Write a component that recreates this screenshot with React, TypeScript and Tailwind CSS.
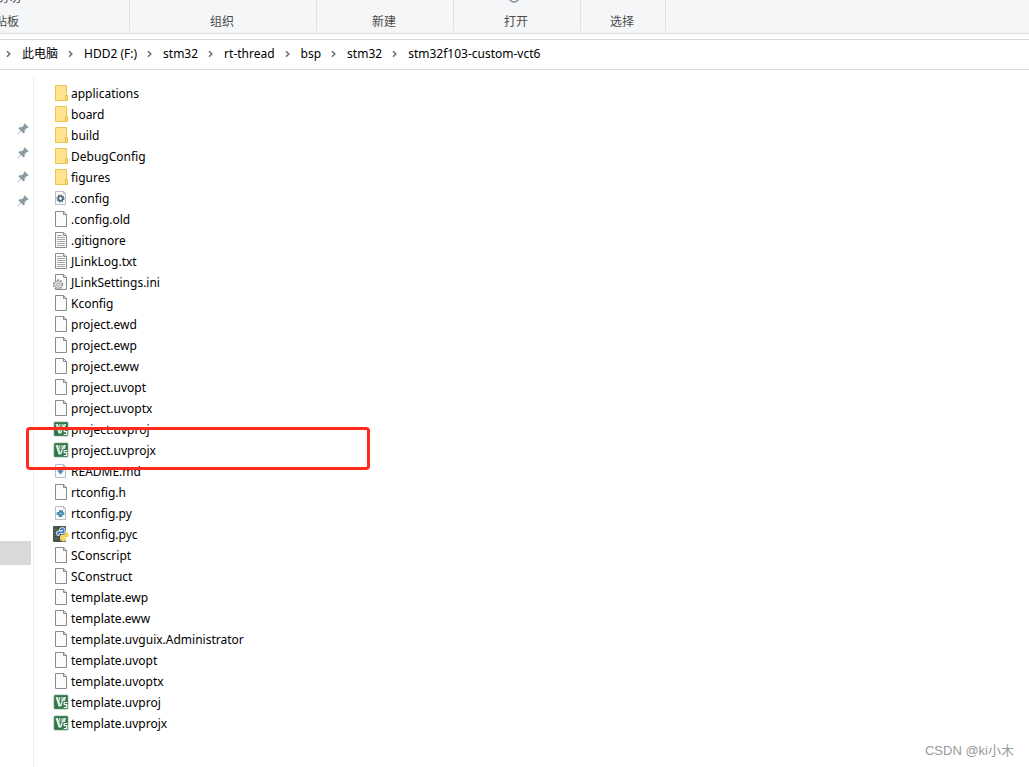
import { Fragment } from "react";

type IconKind =
  | "folder"
  | "config"
  | "file"
  | "text"
  | "settings"
  | "keil"
  | "markdown"
  | "python"
  | "pyc";

const files: { name: string; icon: IconKind }[] = [
  { name: "applications", icon: "folder" },
  { name: "board", icon: "folder" },
  { name: "build", icon: "folder" },
  { name: "DebugConfig", icon: "folder" },
  { name: "figures", icon: "folder" },
  { name: ".config", icon: "config" },
  { name: ".config.old", icon: "file" },
  { name: ".gitignore", icon: "text" },
  { name: "JLinkLog.txt", icon: "text" },
  { name: "JLinkSettings.ini", icon: "settings" },
  { name: "Kconfig", icon: "file" },
  { name: "project.ewd", icon: "file" },
  { name: "project.ewp", icon: "file" },
  { name: "project.eww", icon: "file" },
  { name: "project.uvopt", icon: "file" },
  { name: "project.uvoptx", icon: "file" },
  { name: "project.uvproj", icon: "keil" },
  { name: "project.uvprojx", icon: "keil" },
  { name: "README.md", icon: "markdown" },
  { name: "rtconfig.h", icon: "file" },
  { name: "rtconfig.py", icon: "python" },
  { name: "rtconfig.pyc", icon: "pyc" },
  { name: "SConscript", icon: "file" },
  { name: "SConstruct", icon: "file" },
  { name: "template.ewp", icon: "file" },
  { name: "template.eww", icon: "file" },
  { name: "template.uvguix.Administrator", icon: "file" },
  { name: "template.uvopt", icon: "file" },
  { name: "template.uvoptx", icon: "file" },
  { name: "template.uvproj", icon: "keil" },
  { name: "template.uvprojx", icon: "keil" },
];

const path = ["此电脑", "HDD2 (F:)", "stm32", "rt-thread", "bsp", "stm32", "stm32f103-custom-vct6"];

const groups = [
  { label: "组织", width: "w-[187px]" },
  { label: "新建", width: "w-[137px]" },
  { label: "打开", width: "w-[127px]" },
  { label: "选择", width: "w-[85px]" },
];

function Page() {
  return (
    <>
      <path d="M2.5.5h8l3 3v12h-11z" fill="#fafbfc" stroke="#8b8b8b" />
      <path d="M10.5.5v3h3" fill="none" stroke="#8b8b8b" />
    </>
  );
}

function SmallPage() {
  return (
    <>
      <path d="M2.5 1.5h8l2 2v11h-10z" fill="#f8fafb" stroke="#b9bec2" />
      <path d="M10.5 1.5v2h2" fill="none" stroke="#b9bec2" />
    </>
  );
}

function FileIcon({ kind }: { kind: IconKind }) {
  return (
    <svg width="16" height="16" viewBox="0 0 16 16" className="shrink-0" aria-hidden="true">
      {kind === "folder" && (
        <>
          <path d="M2.5.5h11v15h-11z" fill="#ffe391" stroke="#eac64f" />
          <path d="M12.5 10.5h2v5h-2z" fill="#ffe08a" stroke="#e6bf45" />
        </>
      )}
      {kind === "file" && <Page />}
      {kind === "text" && (
        <>
          <Page />
          <path d="M4 3.5h5M4 5.5h8M4 7.5h8M4 9.5h8M4 11.5h8M4 13.5h8" stroke="#a8a8a8" />
        </>
      )}
      {kind === "settings" && (
        <>
          <Page />
          <circle cx="5" cy="10.5" r="4.4" fill="#f1f1f1" stroke="#8e8e8e" strokeWidth="1.6" strokeDasharray="1.7 1.1" />
          <circle cx="5" cy="10.5" r="3.6" fill="#e4e4e4" stroke="#9b9b9b" strokeWidth=".7" />
          <circle cx="5" cy="10.5" r="1.4" fill="#fff" stroke="#888" strokeWidth=".8" />
        </>
      )}
      {kind === "config" && (
        <>
          <SmallPage />
          <circle cx="7.5" cy="8.5" r="3.2" fill="none" stroke="#50697a" strokeWidth="1.6" strokeDasharray="1.4 1.1" />
          <circle cx="7.5" cy="8.5" r="2.2" fill="#fff" stroke="#50697a" strokeWidth="1.6" />
        </>
      )}
      {kind === "markdown" && (
        <>
          <SmallPage />
          <path d="M6 5.500h3v2h2L7.500 11.500 4 7.500h2z" fill="#4d8fb3" />
        </>
      )}
      {kind === "python" && (
        <>
          <SmallPage />
          <path
            d="M6 5.500Q6 5 7 5h1.500Q10 5 10 6v1h.5q1 0 1 1.500T10.500 10H9.500v1q0 1-1 1h-2q-1 0-1-1v-1h-1q-1 0-1-1.500T4.500 7H6z"
            fill="#4b8fb5"
          />
          <path d="M6 8.500h3.500" stroke="#b5d3e2" strokeWidth=".6" />
        </>
      )}
      {kind === "pyc" && (
        <>
          <rect width="13" height="16" rx="1" fill="#46544a" />
          <path d="M1 3.500h3M1 6.500h2M1 9.500h3M1 12.500h4" stroke="#637468" strokeWidth=".8" />
          <path
            d="M6.500 3.500Q6.500 1.500 9.300 1.500T12 3.500V6q0 1.500-1.500 1.500h-3Q6 7.500 6 9.500H5Q3.500 9.500 3.500 7T5 5h4.500V4.500h-3z"
            fill="#4384bd"
            stroke="#fff"
            strokeWidth=".8"
          />
          <path
            d="M12.500 6H14q2 0 2 2.700T14 11.500h-4v.5h3v1.500q0 1.500-2.500 1.500T7.500 13.500v-3Q7.500 9 9 9h2q1.500 0 1.500-1.500z"
            fill="#fccf35"
            stroke="#fff"
            strokeWidth=".6"
          />
        </>
      )}
      {kind === "keil" && (
        <>
          <rect x="1" y="1" width="14" height="14" rx="1" fill="#2f7548" stroke="#80a98c" strokeWidth=".7" />
          <path d="M2.500 3H5l2 6v3.500H5.500z" fill="#dce9df" />
          <path d="M6 3h1.300v4H6.500zM8.500 3h1.300l-.5 4h-.8z" fill="#dce9df" />
          <path d="M10.700 3H13l-1 4H10L8.500 12.500H6.500L8 8.500z" fill="#dce9df" />
          <path d="M14.200 8.500h-3v2.200h2.500v2.800h-3" fill="none" stroke="#fff" strokeWidth="1.200" />
        </>
      )}
    </svg>
  );
}

function Chevron() {
  return (
    <span className="flex w-[26px] shrink-0 justify-center">
      <svg width="6" height="8" viewBox="0 0 6 8" aria-hidden="true">
        <path d="M1 1.200 3.800 4 1 6.800" fill="none" stroke="#707070" strokeWidth="1.600" />
      </svg>
    </span>
  );
}

function Pin() {
  return (
    <svg width="12" height="12" viewBox="0 0 11 11" aria-hidden="true">
      <path d="M6.800.3 10.700 4l-1 .8-.7-.2-2 2 .1 2-1 1L3.800 7.300.5 10.700l-.2-.3L3.400 7 1.200 4.800l1-1 2.200.2 2-2-.4-.8z" fill="#8d9aa3" />
    </svg>
  );
}

export default function App() {
  return (
    <div className="relative flex min-h-screen flex-col overflow-hidden bg-white font-['Noto_Sans','Noto_Sans_CJK_SC',sans-serif] text-xs text-black">
      {/* Ribbon */}
      <header className="flex h-[34px] shrink-0 overflow-hidden border-b border-[#dadbdc] bg-[#f5f6f7] text-[#4b4b4b]">
        <div className="flex h-[31px] w-[130px] shrink-0 flex-col justify-end gap-1.5 border-r border-[#e0e1e2]">
          <span className="-ml-[3px] leading-[18px]">剪切</span>
          <span className="-ml-[17px] leading-[18px]">剪贴板</span>
        </div>
        {groups.map((group) => (
          <div
            key={group.label}
            className={`flex h-[31px] shrink-0 flex-col items-center justify-end gap-2.5 border-r border-[#e0e1e2] pr-0.5 ${group.width}`}
          >
            {group.label === "打开" && (
              <svg width="12" height="12" viewBox="0 0 12 12" className="mr-1 shrink-0" aria-hidden="true">
                <circle cx="6" cy="6" r="5" fill="#f5f6f7" stroke="#8a8f94" strokeWidth="1.500" />
              </svg>
            )}
            <span className="leading-[18px]">{group.label}</span>
          </div>
        ))}
      </header>

      {/* Address bar */}
      <nav className="mt-[5px] flex h-[31px] shrink-0 items-center border-y border-[#d9d9d9] pb-0.5">
        <div className="-ml-1 flex items-center">
          {path.map((part, index) => (
            <Fragment key={index}>
              <Chevron />
              <button className="whitespace-nowrap">{part}</button>
            </Fragment>
          ))}
        </div>
      </nav>

      <div className="flex grow pt-[7px]">
        {/* Quick access */}
        <aside className="flex w-[34px] shrink-0 flex-col border-r border-[#f0f0f0] pt-10">
          {[0, 1, 2, 3].map((pin) => (
            <div key={pin} className="flex h-6 items-center pl-[17px]">
              <Pin />
            </div>
          ))}
          <div className="mt-[328px] h-6 w-[31px] bg-[#d9d9d9]" />
        </aside>

        {/* File list */}
        <ul className="grow pt-[6px] pl-[19px]">
          {files.map((file) => (
            <li key={file.name} className="flex h-[21px] gap-[2px]">
              <span className="pt-0.5">
                <FileIcon kind={file.icon} />
              </span>
              <span className="leading-[21px] whitespace-nowrap">{file.name}</span>
            </li>
          ))}
        </ul>
      </div>

      {/* Highlight around the project file */}
      <div className="absolute top-[427px] left-[26px] h-[43px] w-[344px] rounded border-[3px] border-[#ff2a1c]" />

      <span className="absolute right-[15px] bottom-2 font-['Liberation_Sans','Noto_Sans_CJK_SC',sans-serif] text-[13px] leading-4 text-[#999]">
        CSDN @ki小木
      </span>
    </div>
  );
}
